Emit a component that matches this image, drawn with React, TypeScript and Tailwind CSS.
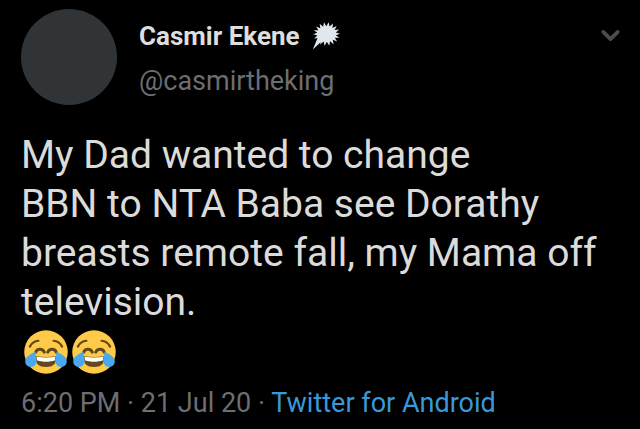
import { ChevronDown } from "lucide-react";

const SPIKES = 18;

function spikyPoints() {
  const points: string[] = [];
  for (let i = 0; i < SPIKES * 2; i++) {
    const angle = (i * Math.PI) / SPIKES - Math.PI / 2 + 0.15;
    const rx = i % 2 === 0 ? 13.4 : 9.4;
    const ry = i % 2 === 0 ? 12 : 7.8;
    points.push(`${(14.6 + rx * Math.cos(angle)).toFixed(2)},${(12 + ry * Math.sin(angle)).toFixed(2)}`);
  }
  return points.join(" ");
}

function BurstIcon() {
  return (
    <svg viewBox="0 0 28 28" className="h-7 w-7 shrink-0" role="img" aria-label="Anger bubble">
      <polygon points={spikyPoints()} fill="#e1e8ed" />
      <path d="M6 15 L0.8 27.6 L10.5 18.5 Z" fill="#e1e8ed" />
    </svg>
  );
}

function JoyIcon() {
  return (
    <svg viewBox="0 0 36 36" className="h-11 w-11" role="img" aria-label="Face with tears of joy">
      <circle cx="18" cy="18" r="17.8" fill="#fdcb48" />
      <path
        d="M4.8 13.6 C6.2 11 8.6 9 11.8 8.8 M31.2 13.6 C29.8 11 27.4 9 24.2 8.8"
        fill="none"
        stroke="#65471b"
        strokeWidth="1.8"
        strokeLinecap="round"
      />
      <path
        d="M9.6 18.2 C10.6 15 15.4 15 16.6 18.2 M19.4 18.2 C20.6 15 25.4 15 26.4 18.2"
        fill="none"
        stroke="#65471b"
        strokeWidth="2.4"
        strokeLinecap="round"
      />
      <path d="M10 21.4 C15 22.2 21 22.2 26 21.4 C27 27.6 24 30.2 18 30.2 C12 30.2 9 27.6 10 21.4 Z" fill="#65471b" />
      <path d="M10.4 21.8 C15 22.6 21 22.6 25.6 21.8 L25.4 24.8 C21 26.4 15 26.4 10.6 24.8 Z" fill="#fff" />
      <path d="M9.4 17.8 C5.6 19.4 1.2 21.8 1 25.6 C0.9 28.4 3 30.2 5.6 30.2 C8.6 30.2 10.4 28 10.4 25.2 C10.4 22.6 9.2 20.6 9.4 17.8 Z" fill="#4ba8ee" />
      <path d="M26.6 17.8 C30.4 19.4 34.8 21.8 35 25.6 C35.1 28.4 33 30.2 30.4 30.2 C27.4 30.2 25.6 28 25.6 25.2 C25.6 22.6 26.8 20.6 26.6 17.8 Z" fill="#4ba8ee" />
    </svg>
  );
}

export default function App() {
  return (
    <main className="min-h-screen bg-black font-[Roboto,sans-serif]">
      <article className="px-[21px] pt-[9px]">
        <header className="flex items-start">
          <div className="h-24 w-24 shrink-0 rounded-full bg-[#303436]" />
          <div className="ml-[22px] min-w-0 flex-1 pt-[9px]">
            <div className="flex items-center gap-3">
              <h1 className="text-[26px] leading-9 font-bold text-[#dedede]">Casmir Ekene</h1>
              <BurstIcon />
            </div>
            <p className="mt-[9px] text-[27px] leading-9 text-[#6b6e72]">@casmirtheking</p>
          </div>
          <button type="button" aria-label="More options" className="-mr-1.5 pt-3 text-[#4a4c4f]">
            <ChevronDown size={29} strokeWidth={3} />
          </button>
        </header>

        <p className="mt-[26px] text-[39px] leading-[49px] text-[#dbdbdb]">
          My Dad wanted to change
          <br />
          BBN to NTA Baba see Dorathy
          <br />
          breasts remote fall, my Mama off
          <br />
          television.
        </p>
        <div className="mt-[3px] flex gap-1 pl-[3px]">
          <JoyIcon />
          <JoyIcon />
        </div>

        <footer className="mt-3 text-[27px] leading-[34px] text-[#6b6e74]">
          <time dateTime="2020-07-20T18:20">6:20 PM · 21 Jul 20</time> ·{" "}
          <a href="#" className="text-[#3a98d8]">
            Twitter for Android
          </a>
        </footer>
      </article>
    </main>
  );
}
